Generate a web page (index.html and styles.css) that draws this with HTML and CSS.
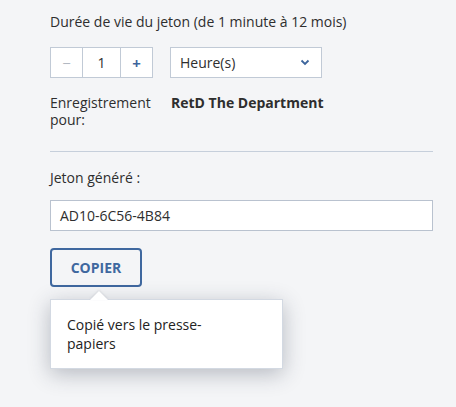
FILE: index.html
```html
<!DOCTYPE html>
<html lang="fr">
<head>
<meta charset="utf-8">
<link rel="stylesheet" href="styles.css">
</head>
<body>
<div class="panel">
  <div class="label">Durée de vie du jeton (de 1 minute à 12 mois)</div>
  <div class="controls">
    <div class="stepper">
      <span class="step minus">&minus;</span>
      <span class="value">1</span>
      <span class="step plus">+</span>
    </div>
    <div class="select">
      <span>Heure(s)</span>
      <svg class="chev" width="10" height="7" viewBox="0 0 10 7"><path d="M1.5 1.5 L5 5 L8.5 1.5" fill="none" stroke="#3d659c" stroke-width="1.8"/></svg>
    </div>
  </div>
  <div class="reg">
    <div class="reg-label">Enregistrement pour:</div>
    <div class="reg-value">RetD The Department</div>
  </div>
  <hr class="divider">
  <div class="label2">Jeton généré :</div>
  <div class="token">AD10-6C56-4B84</div>
  <div class="copy-wrap">
    <button class="copy">COPIER</button>
    <div class="tooltip">Copié vers le presse-papiers</div>
  </div>
</div>
</body>
</html>
```

FILE: styles.css
```css
html, body {
  margin: 0;
  padding: 0;
  background: #f4f5f7;
}
body {
  font-family: "Open Sans", "Noto Sans", sans-serif;
  font-size: 14px;
  color: #2e2e2e;
  width: 456px;
  height: 407px;
  overflow: hidden;
}
.panel {
  padding: 12px 23px 0 50px;
}
.label {
  line-height: 20px;
  height: 20px;
}
.controls {
  display: flex;
  gap: 17px;
  margin-top: 15px;
  height: 31px;
}
.stepper {
  display: flex;
  border: 1px solid #c1cad6;
  background: #fff;
  box-sizing: border-box;
  width: 103px;
  height: 31px;
}
.stepper > span {
  display: flex;
  align-items: center;
  justify-content: center;
}
.step {
  width: 31px;
  font-size: 15px;
}
.minus {
  color: #b3b9c2;
  border-right: 1px solid #c1cad6;
}
.plus {
  color: #3d659c;
  font-weight: 700;
  border-left: 1px solid #c1cad6;
}
.value {
  flex: 1;
}
.select {
  display: flex;
  align-items: center;
  justify-content: space-between;
  box-sizing: border-box;
  width: 152px;
  height: 31px;
  border: 1px solid #c1cad6;
  background: #fff;
  padding: 0 11px 0 9px;
}
.reg {
  display: flex;
  margin-top: 16px;
  line-height: 17px;
}
.reg-label {
  width: 121px;
}
.reg-value {
  font-weight: 700;
}
.divider {
  border: 0;
  border-top: 1px solid #c6cfdb;
  margin: 23px 0 0 0;
}
.label2 {
  margin-top: 16px;
  line-height: 20px;
}
.token {
  margin-top: 12px;
  box-sizing: border-box;
  height: 31px;
  border: 1px solid #b9c2cf;
  background: #fff;
  padding: 0 9px;
  display: flex;
  align-items: center;
}
.copy-wrap {
  position: relative;
  margin-top: 17px;
}
.copy {
  box-sizing: border-box;
  width: 92px;
  height: 39px;
  border: 2px solid #3f689f;
  border-radius: 4px;
  background: #f4f5f7;
  color: #3f689f;
  font-family: "Open Sans", "Noto Sans", sans-serif;
  font-weight: 700;
  font-size: 14px;
  padding: 0;
}
.tooltip {
  position: absolute;
  left: 0;
  top: 51px;
  box-sizing: border-box;
  width: 233px;
  height: 70px;
  background: #fff;
  border: 1px solid #d3d9e2;
  box-shadow: 0 5px 20px rgba(40, 50, 70, 0.3);
  padding: 15px 60px 0 16px;
  line-height: 19px;
  color: #222;
}
.tooltip::before {
  content: "";
  position: absolute;
  left: 39px;
  top: -9px;
  width: 0;
  height: 0;
  border-left: 9px solid transparent;
  border-right: 9px solid transparent;
  border-bottom: 9px solid #fff;
  filter: drop-shadow(0 -1px 1px rgba(40,50,70,0.12));
}
```
